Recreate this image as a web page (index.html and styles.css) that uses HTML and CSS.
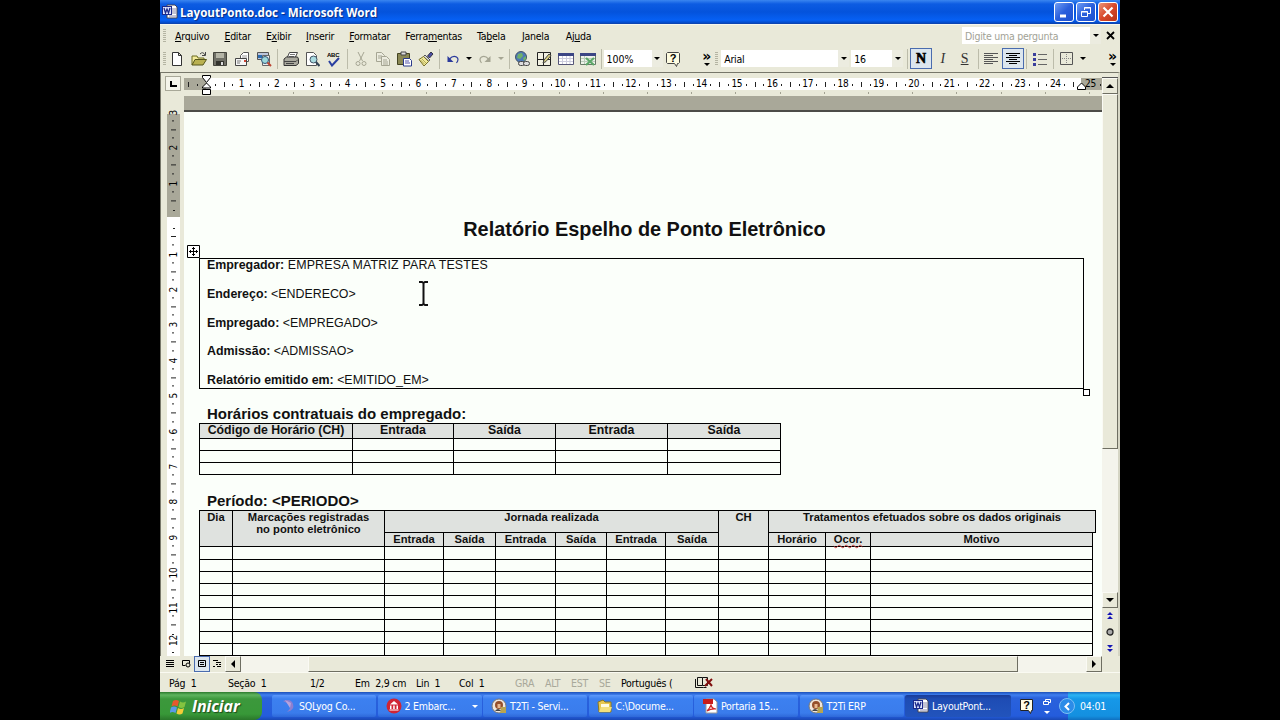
FILE: index.html
```
<!DOCTYPE html>
<html lang="pt-BR">
<head>
  <meta charset="utf-8">
  <title>LayoutPonto.doc - Microsoft Word</title>
  <link rel="stylesheet" href="styles.css">
</head>
<body>
<div id="screen">
  <div id="titlebar">
    <svg class="word-icon" width="16" height="16" viewBox="0 0 16 16"><path d="M5 1h8l2 2v11H5z" fill="#fff" stroke="#445"/><path d="M10 5h4M10 7h4M10 9h4M7 12h7" stroke="#88a"/><rect x="0.5" y="2.5" width="9" height="8" fill="#dde4ff" stroke="#1c2a8c"/><path d="M2 4l1.500 5L5 5l1.500 4L8 4" fill="none" stroke="#1c2a8c" stroke-width="1.300"/></svg>
    <span class="title">LayoutPonto.doc - Microsoft Word</span>
    <div class="window-buttons">
      <div class="win-btn"><svg width="18" height="18"><path d="M5 13h6" stroke="#fff" stroke-width="3"/></svg></div>
      <div class="win-btn"><svg width="18" height="18" fill="none" stroke="#fff"><path d="M7.500 7V4.500h6v6H11M7 5h7"/><path d="M4.500 8.500h6v5h-6zM4 9h7"/></svg></div>
      <div class="win-btn close"><svg width="18" height="18"><path d="M4.500 4.500l9 9M13.500 4.500l-9 9" stroke="#fff" stroke-width="2.200"/></svg></div>
    </div>
  </div>

  <div id="menubar">
    <div class="grip"></div>
    <div class="menu"><u>A</u>rquivo</div>
    <div class="menu"><u>E</u>ditar</div>
    <div class="menu">E<u>x</u>ibir</div>
    <div class="menu"><u>I</u>nserir</div>
    <div class="menu"><u>F</u>ormatar</div>
    <div class="menu">Ferra<u>m</u>entas</div>
    <div class="menu">Ta<u>b</u>ela</div>
    <div class="menu wide"><u>J</u>anela</div>
    <div class="menu wide">Aj<u>u</u>da</div>
    <div class="question">Digite uma pergunta<span class="drop"><i class="caret"></i></span></div>
    <svg class="doc-close" width="9" height="9"><path d="M1 1l7 7M8 1l-7 7" stroke="#000" stroke-width="1.800"/></svg>
  </div>

  <div id="toolbar">
    <div class="grip"></div>
    <div class="tool"><svg width="16" height="16"><path d="M3.500 1.500h6l3 3v10h-9zM9.500 1.500v3h3" fill="#fff" stroke="#333"/></svg></div>
    <div class="tool"><svg width="16" height="16"><path d="M1 14V5h5l1 2h6v2" fill="#f3eb9a" stroke="#6b6b20"/><path d="M1 14l3-5.500h11.500L12 14z" fill="#b9b050" stroke="#55551a"/><path d="M9 3q3-3 5 1M14.500 1v3.500H11" fill="none" stroke="#444"/></svg></div>
    <div class="tool"><svg width="16" height="16"><path d="M1.500 1.500h13v13h-13z" fill="#6f6f66" stroke="#44443c"/><path d="M4 2h8v5H4z" fill="#b4b4a6"/><path d="M4 10h8v4H4z" fill="#33332d"/><path d="M9 11h2v3H9z" fill="#ddd"/></svg></div>
    <div class="tool"><svg width="16" height="16"><path d="M6.500 4.500l3-3h5v9h-8z" fill="#fff" stroke="#555"/><path d="M8 5h5M8 7h5" stroke="#999"/><path d="M1.500 7.500h11v7h-11z" fill="#f6f6f6" stroke="#444"/><path d="M3 10h4M3 12h3" stroke="#777"/><path d="M10 9h2v2h-2z" fill="#c43"/></svg></div>
    <div class="tool"><svg width="16" height="16"><path d="M1.500 1.500h11v7h-11z" fill="#bcc6dc" stroke="#555"/><path d="M2 4h4v3H2z" fill="#2b6bb0"/><path d="M6.500 4.500h7v10h-7z" fill="#eee" stroke="#666"/><circle cx="9" cy="9" r="3.500" fill="#9cd8dc" stroke="#357"/><path d="M11.500 11.500l3.500 3.500" stroke="#b43" stroke-width="2"/></svg></div>
    <div class="sep"></div>
    <div class="tool"><svg width="16" height="16"><path d="M4 7l2.500-5.500h8L12 7z" fill="#fff" stroke="#444"/><path d="M7 3.500h5M6 5.500h5" stroke="#777"/><path d="M1 8l2.500-2h11l1 2v4.500L13 14.500H1z" fill="#aaa99e" stroke="#333"/><path d="M1 10.500h12l2-2M3 12.500h8" fill="none" stroke="#444"/></svg></div>
    <div class="tool"><svg width="16" height="16"><path d="M2.500 1.500h7l3 3v10h-10z" fill="#fff" stroke="#555"/><circle cx="9.500" cy="8.500" r="3.500" fill="#a9dbe0" stroke="#456"/><path d="M12 11l3.500 4" stroke="#345" stroke-width="2"/></svg></div>
    <div class="tool"><svg width="16" height="16"><text x="1" y="6" class="abc">ABC</text><path d="M3 10l3 4.500L13 7" fill="none" stroke="#2a3fa0" stroke-width="2"/></svg></div>
    <div class="sep"></div>
    <div class="tool"><svg width="16" height="16" fill="none" stroke="#a5a593"><path d="M5 1l4.500 9M11 1L6.500 10"/><circle cx="5" cy="12.500" r="2"/><circle cx="11" cy="12.500" r="2"/></svg></div>
    <div class="tool"><svg width="16" height="16" fill="#ececdf" stroke="#a5a593"><path d="M1.500 1.500h5l3 3v6h-8zM3 5h4M3 7h4"/><path d="M6.500 5.500h5l3 3v6h-8zM8 9h4M8 11h5M8 13h5"/></svg></div>
    <div class="tool"><svg width="16" height="16"><path d="M1.500 2.500h12v11h-12z" fill="#8a8854" stroke="#444422"/><path d="M5 1h5v3H5z" fill="#ddd" stroke="#444"/><path d="M7.500 7.500h6l2 2v5.500h-8z" fill="#fff" stroke="#2b3a8c"/><path d="M9 10h4M9 12h5" stroke="#55a"/></svg></div>
    <div class="tool"><svg width="16" height="16"><path d="M13 1l2 2-3.500 4-2-2z" fill="#4d4fa6" stroke="#334"/><path d="M7 4l5 5-1.500 1-5-4.500z" fill="#ddd" stroke="#555"/><path d="M5.500 5.500l5 5L6 15 1 8.500z" fill="#efe99a" stroke="#77702a"/><path d="M4 8l4 4M2.500 9l4 4" stroke="#b5ab5a"/></svg></div>
    <div class="sep"></div>
    <div class="tool"><svg width="16" height="16"><path d="M4.500 8q3.500-4 7-2 3 2 0 6" fill="none" stroke="#2b3a9c" stroke-width="1.200"/><path d="M2.500 5v6h6z" fill="#2b3a9c"/></svg></div>
    <div class="tool-drop"><i class="caret"></i></div>
    <div class="tool"><svg width="16" height="16"><path d="M11.500 8q-3.500-4-7-2-3 2 0 6" fill="none" stroke="#a5a593" stroke-width="1.200"/><path d="M13.500 5v6h-6z" fill="#a5a593"/></svg></div>
    <div class="tool-drop"><i class="caret off"></i></div>
    <div class="sep"></div>
    <div class="tool"><svg width="16" height="16"><circle cx="7" cy="6" r="5.500" fill="#4d78b8" stroke="#456"/><path d="M4 3l4-1 1 3-3 3-3-1zM9 7l3-2v3l-2 2z" fill="#6fb06a"/><g fill="#ddd" stroke="#444"><rect x="4.500" y="10.500" width="6" height="4" rx="2"/><rect x="9.500" y="10.500" width="6" height="4" rx="2"/></g></svg></div>
    <div class="tool"><svg width="16" height="16"><path d="M1.500 1.500h13v13h-13zM1.500 8.500h13M7.500 1.500v13" fill="#f2f1e2" stroke="#222"/><path d="M7 12l1-3 5-6 2 1.500-5 6z" fill="#d8d080" stroke="#444"/></svg></div>
    <div class="tool"><svg width="16" height="16"><path d="M.5 2.500h15v11H.5z" fill="#fff" stroke="#557"/><path d="M0 2h16v3H0z" fill="#3c4684"/><path d="M1 7.500h14M1 10.500h14M4.500 5v8M8.500 5v8M12 5v8" stroke="#ccd"/></svg></div>
    <div class="tool"><svg width="16" height="16"><path d="M.5 2.500h15v11H.5z" fill="#eef2ea" stroke="#676"/><path d="M0 2h16v3H0z" fill="#3c4684"/><path d="M1 7.500h14M1 10.500h14M4.500 5v8" stroke="#bcb"/><path d="M6 7l8 7M14 7l-8 7" stroke="#5ca868" stroke-width="2.200"/></svg></div>
    <div class="sep"></div>
    <div class="combo zoom">100%<span class="drop"><i class="caret"></i></span></div>
    <div class="tool"><svg width="16" height="16"><path d="M2.500 1.500h11l1 1v9l-1 1h-1l-1 3-2-3h-7l-1-1v-9z" fill="#fdfbe0" stroke="#444"/><text x="4.800" y="11" class="help-mark">?</text></svg></div>
    <div class="more first"><span>»</span><i class="caret"></i></div>
    <div class="grip second"></div>
    <div class="combo font">Arial<span class="drop"><i class="caret"></i></span></div>
    <div class="combo size">16<span class="drop"><i class="caret"></i></span></div>
    <div class="sep"></div>
    <div class="tool on fmt bold">N</div>
    <div class="tool fmt italic">I</div>
    <div class="tool fmt under">S</div>
    <div class="sep wide"></div>
    <div class="tool"><svg width="14" height="12" stroke="#555"><path d="M0 .5h14M0 2.500h9M0 4.500h14M0 6.500h9M0 8.500h14M0 10.500h9"/></svg></div>
    <div class="tool on"><svg width="14" height="12" stroke="#000"><path d="M0 .5h14M3 2.500h8M0 4.500h14M3 6.500h8M0 8.500h14M3 10.500h8"/></svg></div>
    <div class="sep"></div>
    <div class="tool"><svg width="14" height="14"><path d="M5 2.500h9M5 7.500h9M5 12.500h9" stroke="#666"/><path d="M0 1h3v3H0zM0 6h3v3H0zM0 11h3v3H0z" fill="#3b3f9c"/></svg></div>
    <div class="sep wide"></div>
    <div class="tool"><svg width="13" height="13" fill="none"><path d="M.5.5h12v12H.5z" stroke="#555"/><path d="M6.500 2v9M2 6.500h9" stroke="#888" stroke-dasharray="1 1"/></svg></div>
    <div class="tool-drop"><i class="caret"></i></div>
    <div class="more last"><span>»</span><i class="caret"></i></div>
  </div>

  <div id="workspace">
    <div id="main">
      <div id="hruler">
        <div class="tab-corner"><svg width="7" height="6"><path d="M1 0v5h6" fill="none" stroke="#000" stroke-width="2"/></svg></div>
        <div class="strip">
          <div class="lead"></div>
          <div class="zero"></div>
          <span>1</span><span>2</span><span>3</span><span>4</span><span>5</span><span>6</span><span>7</span><span>8</span><span>9</span><span>10</span><span>11</span><span>12</span><span>13</span><span>14</span><span>15</span><span>16</span><span>17</span><span>18</span><span>19</span><span>20</span><span>21</span><span>22</span><span>23</span><span>24</span><span class="tail">25</span>
          <svg class="indent" width="11" height="20" fill="#fff" stroke="#000"><path d="M1.500.5h8v2l-4 5-4-5zM5.500 8l4 4v1h-8v-1zM1.500 14.500h8v5h-8z"/></svg>
          <svg class="indent right" width="11" height="9" fill="#fff" stroke="#000"><path d="M5.500 1l4 4v2.500h-8V5z"/></svg>
        </div>
        <div class="tabs"></div>
      </div>
      <div id="document">
        <div id="vruler">
          <div class="strip">
            <span class="cut">3</span><span>2</span><span>1</span><div class="zero"></div><span>1</span><span>2</span><span>3</span><span>4</span><span>5</span><span>6</span><span>7</span><span>8</span><span>9</span><span>10</span><span>11</span><span class="end">12</span>
          </div>
        </div>
        <div id="page">
          <h1>Relatório Espelho de Ponto Eletrônico</h1>
          <div class="employer">
            <p class="name"><b>Empregador:</b> EMPRESA MATRIZ PARA TESTES</p>
            <p><b>Endereço:</b> &lt;ENDERECO&gt;</p>
            <p><b>Empregado:</b> &lt;EMPREGADO&gt;</p>
            <p><b>Admissão:</b> &lt;ADMISSAO&gt;</p>
            <p><b>Relatório emitido em:</b> &lt;EMITIDO_EM&gt;</p>
            <svg class="move" width="13" height="13"><path d="M.5.5h12v12H.5z" fill="#fff" stroke="#000"/><path d="M6.500 2v9M2 6.500h9M5 3.500h3M5 9.500h3M3.500 5v3M9.500 5v3" stroke="#000"/></svg>
            <div class="resize"></div>
            <svg class="ibeam" width="11" height="27" fill="none" stroke="#111" stroke-width="2"><path d="M1 2h3l1.500 1L7 2h3M5.500 3v21M1 25h3l1.500-1L7 25h3"/></svg>
          </div>
          <h2 class="hours">Horários contratuais do empregado:</h2>
          <table class="schedule">
            <colgroup><col class="s1"><col class="s2"><col class="s3"><col class="s4"><col class="s5"></colgroup>
            <tr><th>Código de Horário (CH)</th><th>Entrada</th><th>Saída</th><th>Entrada</th><th>Saída</th></tr>
            <tr><td></td><td></td><td></td><td></td><td></td></tr>
            <tr><td></td><td></td><td></td><td></td><td></td></tr>
            <tr><td></td><td></td><td></td><td></td><td></td></tr>
          </table>
          <h2 class="period">Período: &lt;PERIODO&gt;</h2>
          <table class="journey">
            <colgroup><col class="j-day"><col class="j-marks"><col class="j-e1"><col class="j-s1"><col class="j-e2"><col class="j-s2"><col class="j-e3"><col class="j-s3"><col class="j-ch"><col class="j-time"><col class="j-oc"><col class="j-why"><col class="j-over"></colgroup>
            <tr class="top"><th rowspan="2">Dia</th><th rowspan="2">Marcações registradas<br>no ponto eletrônico</th><th colspan="6">Jornada realizada</th><th rowspan="2">CH</th><th colspan="4">Tratamentos efetuados sobre os dados originais</th></tr>
            <tr class="sub"><th>Entrada</th><th>Saída</th><th>Entrada</th><th>Saída</th><th>Entrada</th><th>Saída</th><th>Horário</th><th><span class="typo">Ocor.</span></th><th>Motivo</th><td class="over"></td></tr>
            <tr class="tall"><td></td><td></td><td></td><td></td><td></td><td></td><td></td><td></td><td></td><td></td><td></td><td></td></tr>
            <tr><td></td><td></td><td></td><td></td><td></td><td></td><td></td><td></td><td></td><td></td><td></td><td></td></tr>
            <tr><td></td><td></td><td></td><td></td><td></td><td></td><td></td><td></td><td></td><td></td><td></td><td></td></tr>
            <tr><td></td><td></td><td></td><td></td><td></td><td></td><td></td><td></td><td></td><td></td><td></td><td></td></tr>
            <tr><td></td><td></td><td></td><td></td><td></td><td></td><td></td><td></td><td></td><td></td><td></td><td></td></tr>
            <tr><td></td><td></td><td></td><td></td><td></td><td></td><td></td><td></td><td></td><td></td><td></td><td></td></tr>
            <tr><td></td><td></td><td></td><td></td><td></td><td></td><td></td><td></td><td></td><td></td><td></td><td></td></tr>
            <tr><td></td><td></td><td></td><td></td><td></td><td></td><td></td><td></td><td></td><td></td><td></td><td></td></tr>
            <tr><td></td><td></td><td></td><td></td><td></td><td></td><td></td><td></td><td></td><td></td><td></td><td></td></tr>
          </table>
        </div>
      </div>
    </div>
    <div id="vscroll">
      <div class="split"></div>
      <div class="sbtn"><i class="arrow up"></i></div>
      <div class="thumb"></div>
      <div class="track"></div>
      <div class="sbtn"><i class="arrow down"></i></div>
      <div class="browse">
        <svg width="8" height="8" fill="#1414b4"><path d="M4 0l3 3H1zM4 4l3 3H1z"/></svg>
        <svg width="8" height="8"><circle cx="4" cy="4" r="3" fill="#aaa" stroke="#222" stroke-width="1.300"/></svg>
        <svg width="8" height="8" fill="#1414b4"><path d="M4 4L1 1h6zM4 8L1 5h6z"/></svg>
      </div>
    </div>
  </div>

  <div id="hscroll">
    <div class="view"><svg width="8" height="8" stroke="#000"><path d="M0 .5h8M0 2.500h8M0 4.500h8M0 6.500h8"/></svg></div>
    <div class="view"><svg width="9" height="8" fill="none" stroke="#000"><path d="M.5 5.500v-5h7v3M.5 5.500h3"/><circle cx="6" cy="5" r="2"/></svg></div>
    <div class="view on"><svg width="8" height="8" fill="none" stroke="#000"><path d="M.5.500h7v6h-7zM2 2.500h4M2 4.500h4"/></svg></div>
    <div class="view"><svg width="9" height="8" stroke="#000"><path d="M0 .5h5M3 2.500h5M3 4.500h2M6 4.500h2M0 6.500h2M4 6.500h4"/></svg></div>
    <div class="sbtn"><i class="arrow left"></i></div>
    <div class="track before"></div>
    <div class="thumb"></div>
    <div class="track"></div>
    <div class="sbtn"><i class="arrow right"></i></div>
  </div>

  <div id="status">
    <span class="st-page">Pág&nbsp; 1</span>
    <span class="st-section">Seção&nbsp; 1</span>
    <span class="st-pages">1/2</span>
    <span class="st-at">Em&nbsp; 2,9 cm</span>
    <span class="st-line">Lin&nbsp; 1</span>
    <span class="st-col">Col&nbsp; 1</span>
    <span class="off st-gra">GRA</span>
    <span class="off st-alt">ALT</span>
    <span class="off st-est">EST</span>
    <span class="off st-se">SE</span>
    <span class="st-lang">Português (</span>
    <svg width="20" height="11" fill="none" stroke="#111"><path d="M3.500.5h5v8h-5zM1.500 2v8.500h8M8.500.5h5v8h-5M9.500 10.500h3"/><path d="M12 2l6 7M18 2l-7 7" stroke="#801010" stroke-width="2"/></svg>
  </div>

  <div id="taskbar">
    <div class="start">
      <svg width="18" height="17"><path d="M3 3q3-2 6 0L7.500 8.500q-3-2-6 0z" fill="#e8582c"/><path d="M10 3.500q3 2 6 0L14.500 9q-3 2-6 0z" fill="#84c440"/><path d="M1 9.500q3-2 6 0L5.500 15q-3-2-6 0z" fill="#5a9ae8"/><path d="M8 10q3 2 6 0l-1.500 5.500q-3 2-6 0z" fill="#f4cc38"/></svg>
      <span>Iniciar</span>
    </div>
    <div class="task"><svg width="16" height="16"><path d="M3 3q8-3 10 3t-6 8q5-4 2-7T3 3z" fill="#8d7fd0"/><path d="M5 2l6 3-1 5z" fill="#b7a3dc"/></svg><span>SQLyog Co...</span></div>
    <div class="task"><svg width="16" height="16"><circle cx="8" cy="8" r="7.500" fill="#d02434"/><path d="M4 6.500L8 3l4 3.500zM4 7.500h1.500v3.500H4zM7.200 7.500h1.500v3.500H7.200zM10.500 7.500H12v3.500h-1.500zM3.500 11.500h9v1h-9z" fill="#fff"/></svg><span>2 Embarc...</span><i class="caret white"></i></div>
    <div class="task"><svg width="16" height="16"><circle cx="8" cy="8" r="7" fill="#f0e6dc" stroke="#777"/><circle cx="8" cy="7" r="4" fill="#96502c"/><path d="M6.500 6h3v4h-3z" fill="#e8b890"/><path d="M10 9h5v6h-6z" fill="#b8a450"/><path d="M4 13q3-4 6 0z" fill="#444"/></svg><span>T2Ti - Servi...</span></div>
    <div class="task"><svg width="16" height="16"><path d="M1 4l5-2 2 2h6v10H2z" fill="#e8c850" stroke="#8c7820"/><path d="M4 6h8v7H4z" fill="#fffbe0"/><path d="M2 14l2-5h11l-2 5z" fill="#f4e07c"/></svg><span>C:\Docume...</span></div>
    <div class="task"><svg width="16" height="16"><path d="M4 1h8l3 3v11H4z" fill="#fff" stroke="#999"/><path d="M1 1h10v5H1z" fill="#c81c1c"/><path d="M5 13q3-3 4-6 1 4 5 4-5-.5-9 2z" fill="none" stroke="#d02424" stroke-width="1.200"/></svg><span>Portaria 15...</span></div>
    <div class="task"><svg width="16" height="16"><circle cx="8" cy="8" r="7" fill="#f0e6dc" stroke="#777"/><circle cx="8" cy="7" r="4" fill="#96502c"/><path d="M6.500 6h3v4h-3z" fill="#e8b890"/><path d="M10 9h5v6h-6z" fill="#b8a450"/><path d="M4 13q3-4 6 0z" fill="#444"/></svg><span>T2Ti ERP</span></div>
    <div class="task active"><svg width="16" height="16"><path d="M5 1h8l2 2v11H5z" fill="#fff" stroke="#445"/><path d="M10 5h4M10 7h4M10 9h4M7 12h7" stroke="#88a"/><rect x="0.500" y="2.500" width="9" height="8" fill="#dde4ff" stroke="#1c2a8c"/><path d="M2 4l1.500 5L5 5l1.500 4L8 4" fill="none" stroke="#1c2a8c" stroke-width="1.300"/></svg><span>LayoutPont...</span></div>
    <div class="lang-bar">
      <svg width="13" height="15"><path d="M.5.5h12v11h-1l-1 3-2-3h-8z" fill="#fffce8" stroke="#222"/><text x="3.300" y="10" class="help-mark">?</text></svg>
      <div class="lang-options"><svg width="8" height="7" fill="none" stroke="#fff"><path d="M2.500 2V.5h5v3H6M.5 2.500h5v3h-5z"/></svg><i class="caret white"></i></div>
    </div>
    <div class="tray">
      <div class="expand"><svg width="8" height="9"><path d="M6 1L2.500 4.500 6 8" fill="none" stroke="#fff" stroke-width="2"/></svg></div>
      <span>04:01</span>
    </div>
  </div>
</div>
</body>
</html>
```
FILE: styles.css
```
html, body {
  height: 100%;
  margin: 0;
  background-color: #000;
}
* {
  box-sizing: border-box;
}
svg {
  display: block;
  flex: none;
}
#screen {
  display: flex;
  flex-direction: column;
  width: 960px;
  height: 720px;
  margin: 0 auto;
  overflow: hidden;
  background-color: #e9e9d9;
  font-family: "DejaVu Sans Condensed", "DejaVu Sans", sans-serif;
  font-stretch: condensed;
  font-size: 10.5px;
  letter-spacing: -0.25px;
  color: #000;
  white-space: nowrap;
}

/* title bar */
#titlebar {
  display: flex;
  align-items: center;
  height: 24px;
  padding: 0 2px 0 2px;
  background: linear-gradient(#3a86f0 0, #0d5ce2 4px, #0453dc 12px, #0660f4 20px, #0448c4 23px, #1340a0 24px);
}
.title {
  margin-left: 2px;
  color: #fff;
  font: bold 11.600px "Open Sans", sans-serif;
  font-stretch: normal;
  letter-spacing: 0;
  text-shadow: 1px 1px 1px #0a2a80;
}
.window-buttons {
  display: flex;
  gap: 2px;
  margin-left: auto;
}
.win-btn {
  width: 20px;
  height: 20px;
  border: 1px solid #fff;
  border-radius: 3px;
  background: linear-gradient(135deg, #6e9cf4, #2a5fdc 50%, #1c50d0);
}
.close {
  background: linear-gradient(135deg, #ec9478, #d8482a 50%, #b83418);
}

/* menus */
#menubar {
  display: flex;
  align-items: center;
  height: 23px;
  border-top: 1px solid #f6f6ee;
  padding: 0 0 1px 3px;
}
.grip {
  width: 3px;
  height: 14px;
  background: repeating-linear-gradient(#b4b4a2 0, #b4b4a2 1px, #e9e9d9 1px, #e9e9d9 2px);
}
.menu {
  margin-left: 15px;
}
.menu.wide {
  margin-left: 16.5px;
}
.grip + .menu {
  margin-left: 9px;
}
.question {
  display: flex;
  align-items: center;
  width: 139px;
  height: 17px;
  margin-left: auto;
  padding-left: 3px;
  background-color: #fff;
  color: #a2a296;
}
.drop {
  display: flex;
  align-items: center;
  justify-content: center;
  width: 11px;
  height: 100%;
  margin-left: auto;
  background-color: #ecece0;
}
.doc-close {
  margin: 0 5px 0 5px;
}
.caret {
  flex: none;
  width: 0;
  height: 0;
  border: 3px solid transparent;
  border-top-color: #000;
  border-bottom: 0;
}
.caret.off {
  border-top-color: #a5a593;
}
.caret.white {
  border-top-color: #fff;
}

/* toolbar */
#toolbar {
  display: flex;
  align-items: center;
  height: 25px;
  padding: 0 0 2px 3px;
}
.tool {
  display: flex;
  flex: none;
  align-items: center;
  justify-content: center;
  width: 21.75px;
  height: 21px;
}
.on {
  border: 1px solid #4a6cae;
  background-color: #dce6ee;
}
.sep {
  flex: none;
  width: 1px;
  height: 20px;
  margin: 0 2px;
  background-color: #bcbcaa;
}
.tool-drop {
  display: flex;
  justify-content: center;
  width: 10.500px;
}
.combo {
  display: flex;
  flex: none;
  align-items: center;
  height: 17px;
  padding-left: 3px;
  background-color: #fff;
}
.zoom {
  width: 59px;
  letter-spacing: 0;
}
.font {
  width: 128px;
}
.size {
  width: 52px;
  margin: 0 2px 0 2px;
}
.more {
  display: flex;
  flex-direction: column;
  align-items: center;
  width: 11px;
  font: bold 14px "DejaVu Sans", sans-serif;
  line-height: 8px;
}
.more .caret {
  margin-top: 3px;
}
.more.first {
  margin-left: 17px;
}
.more.last {
  margin-left: auto;
  margin-right: 2px;
}
.grip.second {
  margin: 0 3px 0 3px;
}
.fmt {
  font: 14px "Liberation Serif", serif;
  letter-spacing: 0;
  color: #333;
}
.bold {
  font-weight: 900;
  color: #000;
  -webkit-text-stroke: 0.6px #000;
}
.italic {
  font-style: italic;
}
.under {
  text-decoration: underline;
}
.abc {
  font: bold 6px "Liberation Sans", sans-serif;
}
.help-mark {
  font: bold 11px "Liberation Sans", sans-serif;
}

/* rulers */
#workspace {
  display: flex;
  height: 584px;
  border-top: 1px solid #77776a;
  border-right: 2px solid #d5d5c4;
}
#main {
  width: 942px;
  border-left: 1px solid #77776a;
}
#hruler {
  display: flex;
  flex-wrap: wrap;
  align-content: flex-start;
  height: 23px;
  padding-top: 5px;
  font-size: 10px;
}
.tab-corner {
  display: flex;
  align-items: center;
  justify-content: center;
  width: 16px;
  height: 15px;
  margin: -2px 3px 0 4px;
  border: 1px solid #a8a898;
  background-color: #f4f4ea;
}
#hruler .strip {
  position: relative;
  display: flex;
  width: 918px;
  height: 12px;
  background-color: #fff;
}
.lead {
  width: 22px;
  background: linear-gradient(#222, #222) 4px 4px / 1px 5px no-repeat, linear-gradient(#222, #222) 13px 6px / 1px 2px no-repeat, #a9a899;
}
#hruler .zero {
  width: 17.7px;
  background: linear-gradient(#222, #222) 9px 6px / 1px 2px no-repeat;
}
#hruler .strip span {
  flex: none;
  width: 35.4px;
  line-height: 12px;
  text-align: center;
  background:
    linear-gradient(#222, #222) 0 4px / 1px 5px no-repeat,
    linear-gradient(#222, #222) 8.800px 6px / 1px 2px no-repeat,
    linear-gradient(#222, #222) 26.500px 6px / 1px 2px no-repeat;
}
#hruler .strip .tail {
  width: 28.7px;
  padding-left: 6px;
  background:
    linear-gradient(#222, #222) 0 4px / 1px 5px no-repeat,
    linear-gradient(#222, #222) 26.500px 6px / 1px 2px no-repeat,
    linear-gradient(90deg, transparent 8px, #a9a899 8px);
}
.indent {
  position: absolute;
  left: 17px;
  top: -3px;
}
.indent.right {
  left: 892px;
  top: 4px;
}
.tabs {
  width: 896px;
  height: 2px;
  margin: 1px 0 0 45px;
  background: repeating-linear-gradient(90deg, transparent 0, transparent 43.200px, #a2a292 43.200px, #a2a292 44.200px);
}
#document {
  display: flex;
  height: 560px;
}
#vruler {
  width: 23px;
  padding: 16px 0 0 6px;
  font-size: 10px;
}
#vruler .strip {
  display: flow-root;
  width: 13px;
  height: 544px;
  background: linear-gradient(transparent 2px, #a9a899 2px, #a9a899 105.5px, #fff 105.5px);
}
#vruler span {
  display: block;
  width: 13px;
  height: 35.4px;
  line-height: 13px;
  text-align: center;
  writing-mode: vertical-rl;
  transform: rotate(180deg);
  background:
    linear-gradient(#222, #222) 4px 0 / 5px 1px no-repeat,
    linear-gradient(#222, #222) 6px 8.800px / 2px 1px no-repeat,
    linear-gradient(#222, #222) 6px 26.500px / 2px 1px no-repeat;
}
#vruler .cut {
  margin-top: -17px;
  background:
    linear-gradient(#222, #222) 4px 0 / 5px 1px no-repeat,
    linear-gradient(#222, #222) 6px 8.800px / 2px 1px no-repeat;
}
#vruler .end {
  height: 30px;
  padding-top: 0;
  background: linear-gradient(#222, #222) 6px 3px / 2px 1px no-repeat, linear-gradient(#222, #222) 6px 21px / 2px 1px no-repeat;
}
#vruler .zero {
  height: 35.4px;
  background:
    linear-gradient(#222, #222) 6px 8.800px / 2px 1px no-repeat,
    linear-gradient(#222, #222) 6px 26.500px / 2px 1px no-repeat,
    linear-gradient(#222, #222) 4px 34.400px / 5px 1px no-repeat;
}

/* page */
#page {
  width: 918px;
  height: 560px;
  padding: 121px 0 0 15px;
  overflow: hidden;
  background: linear-gradient(#a9a899 14px, #4c4c48 14px, #4c4c48 15.500px, #fbfffa 15.500px);
  font-family: "Liberation Sans", Arial, sans-serif;
  font-stretch: normal;
  letter-spacing: 0;
  color: #111;
}
h1, h2, p {
  margin: 0;
}
h1 {
  width: 891px;
  font-size: 19.900px;
  line-height: 24px;
  text-align: center;
}
.employer {
  position: relative;
  width: 885px;
  height: 131px;
  margin-top: 17px;
  padding: 0 7px;
  border: 1px solid #000;
  font-size: 12.400px;
  line-height: 13px;
}
.employer p {
  margin-bottom: 15.8px;
}
.employer .name {
  letter-spacing: 0.18px;
}
.name b {
  letter-spacing: 0;
}
.move {
  position: absolute;
  left: -13px;
  top: -14px;
}
.resize {
  position: absolute;
  right: -7px;
  bottom: -8px;
  width: 7px;
  height: 7px;
  border: 1px solid #000;
  background-color: #fff;
}
.ibeam {
  position: absolute;
  left: 218px;
  top: 21px;
}
h2 {
  padding-left: 8px;
  font-size: 15px;
  line-height: 18px;
}
.hours {
  margin-top: 16px;
}
.period {
  margin-top: 17px;
}
table {
  table-layout: fixed;
  border-spacing: 0;
  border: solid #000;
  border-width: 1px 0 0 1px;
}
th, td {
  height: 12px;
  padding: 0;
  border: solid #000;
  border-width: 0 1px 1px 0;
  line-height: 11px;
}
th {
  background-color: #dfe2df;
  vertical-align: top;
}
.schedule {
  width: 582px;
  font-size: 12.3px;
}
.schedule th {
  height: 15px;
  line-height: 13px;
}
.s1 { width: 153px; }
.s2 { width: 101px; }
.s3 { width: 102px; }
.s4 { width: 112px; }
.s5 { width: 113px; }
.journey {
  width: 897px;
  border-right: 0;
  font-size: 11.2px;
}
.journey th {
  line-height: 12px;
}
.journey .top th {
  height: 22px;
}
.journey .sub th {
  height: 14px;
}
.journey .tall td {
  height: 13px;
}
.journey .over {
  height: 14px;
  border: 0;
}
.j-day { width: 33px; }
.j-marks { width: 152px; }
.j-e1 { width: 59px; }
.j-s1 { width: 52px; }
.j-e2 { width: 60px; }
.j-s2 { width: 51px; }
.j-e3 { width: 59px; }
.j-s3 { width: 53px; }
.j-ch { width: 50px; }
.j-time { width: 57px; }
.j-oc { width: 45px; }
.j-why { width: 222px; }
.j-over { width: 3px; }
.typo {
  text-decoration: underline wavy #d04040 1px;
  text-decoration-skip-ink: none;
  text-underline-offset: 1px;
}

/* scrollbars */
#vscroll {
  display: flex;
  flex-direction: column;
  width: 16px;
}
.split {
  height: 5px;
  border-bottom: 1px solid #555;
}
.sbtn {
  display: flex;
  flex: none;
  align-items: center;
  justify-content: center;
  width: 16px;
  height: 16px;
  border: 1px solid;
  border-color: #fafaf4 #6e6e62 #6e6e62 #fafaf4;
  background-color: #e9e9d9;
}
.thumb {
  border: 1px solid;
  border-color: #fafaf4 #6e6e62 #6e6e62 #fafaf4;
  background-color: #e9e9d9;
}
.track {
  flex: 1;
  background-color: #f4f4ec;
}
#vscroll .thumb {
  height: 355px;
}
.arrow {
  width: 0;
  height: 0;
  border: 4px solid transparent;
}
.up { border-top: 0; border-bottom-color: #000; }
.down { border-bottom: 0; border-top-color: #000; }
.left { border-left: 0; border-right-color: #000; }
.arrow.right { border-right: 0; border-left-color: #000; }
.browse {
  display: flex;
  flex-direction: column;
  align-items: center;
  justify-content: space-between;
  height: 48px;
  padding: 4px 0;
}
#hscroll {
  display: flex;
  height: 16px;
  padding: 0 18px 0 2px;
}
.view {
  display: flex;
  align-items: center;
  justify-content: center;
  width: 16px;
}
.view:first-child + .view + .view + .view {
  width: 15px;
}
#hscroll .before {
  flex: none;
  width: 67px;
}
#hscroll .thumb {
  width: 710px;
}

/* status bar */
#status {
  display: flex;
  align-items: center;
  height: 20px;
  padding-left: 9px;
  border-top: 1px solid #fafaf2;
}
#status span {
  flex: none;
}
.st-page { width: 59px; }
.st-section { width: 82px; }
.st-pages { width: 45px; }
.st-at { width: 61px; }
.st-line { width: 43px; }
.st-col { width: 56px; }
.st-gra { width: 30px; }
.st-alt { width: 26px; }
.st-est { width: 28px; }
.st-se { width: 22px; }
.st-lang { width: 73px; }
.off {
  color: #a8a89a;
}

/* taskbar */
#taskbar {
  display: flex;
  height: 28px;
  background: linear-gradient(#1c50b8 0, #3f7ff0 3px, #2a62dc 6px, #245cdc 24px, #1a48b4 28px);
  color: #fff;
}
.start {
  display: flex;
  align-items: center;
  width: 102px;
  padding-left: 10px;
  border-radius: 0 8px 8px 0;
  background: linear-gradient(#2c7a2c 0, #5eb45e 3px, #3c983c 7px, #389838 22px, #2a762a 28px);
  font: italic bold 16px "Open Sans", sans-serif;
  font-stretch: normal;
  letter-spacing: -0.1px;
  text-shadow: 1px 1px 1px #1c4a1c;
}
.start span {
  margin-left: 4px;
}
.task {
  display: flex;
  align-items: center;
  width: 104px;
  height: 22px;
  margin: 3px 1.5px 0 0;
  padding: 0 4px 0 8px;
  border-radius: 2px;
  background: linear-gradient(#5c98fa 0, #3c80f0 4px, #3a7cec 18px, #2e68d8);
}
.start + .task {
  margin-left: 10px;
}
.task span {
  margin-left: 3px;
}
.task .caret {
  margin-left: auto;
}
.task.active {
  width: 106px;
  background: linear-gradient(#1a3c98 0, #1e4cb4 4px, #2254bc);
}
.lang-bar {
  display: flex;
  align-items: center;
  margin-left: 7px;
}
.lang-options {
  display: flex;
  flex-direction: column;
  align-items: center;
  gap: 5px;
  margin-left: 10px;
}
.tray {
  display: flex;
  align-items: center;
  width: 52px;
  margin-left: auto;
  background: linear-gradient(#1470c4 0, #2cb4f4 3px, #1698e8 7px, #1490e0 24px, #1070c0 28px);
}
.expand {
  display: flex;
  flex: none;
  align-items: center;
  justify-content: center;
  width: 16px;
  height: 16px;
  margin: 0 5px 0 -9px;
  border-radius: 50%;
  border: 1px solid #7cc0f4;
  background-color: #2c8ce8;
}
```
